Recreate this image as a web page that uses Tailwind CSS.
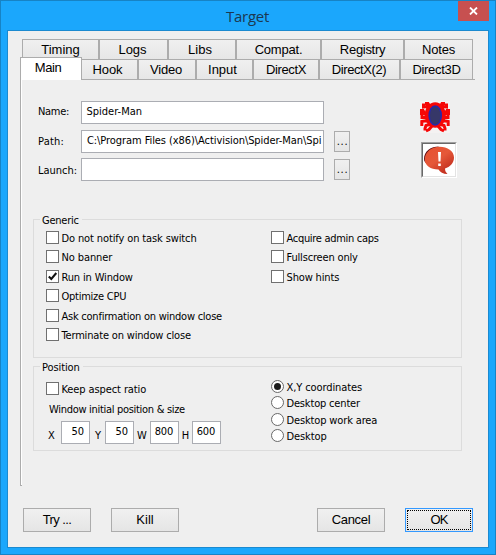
<!DOCTYPE html>
<html lang="en">
<head>
<meta charset="utf-8">
<title>Target</title>
<script src="https://cdn.jsdelivr.net/npm/@tailwindcss/browser@4"></script>
</head>
<body class="w-[496px] h-[555px] overflow-hidden bg-[#1ba7fc] border border-[#1783c5] font-['DejaVu_Sans_Condensed','Liberation_Sans',sans-serif] text-[11px] leading-[13px] text-black">
<header class="h-[29px] flex justify-between">
  <h1 class="w-[45px] ml-[225px] mt-[5px] font-['Open_Sans',sans-serif] text-[15px] leading-[20px] tracking-[-0.25px] text-[#1c3850]">Target</h1>
  <button class="w-[31px] h-5 mr-[6px] bg-[#c75050] flex items-center justify-center" aria-label="Close">
    <svg width="9" height="8" viewBox="0 0 9 8" fill="none" stroke="#fff" stroke-width="1.8"><path d="M1 .5 8 7.5M8 .5 1 7.5"/></svg>
  </button>
</header>
<main class="ml-[6px] w-[482px] h-[518px] border border-[#1b8ad0] bg-[#efefef] pt-2 flex flex-col">
  <nav class="ml-[12px] h-[41px] w-[455px] relative font-['Liberation_Sans',sans-serif] text-[13px] leading-[15px]">
    <div class="ml-[2px] w-[451px] h-[21px] flex text-center border-t border-l border-[#acacac] *:border-r *:border-[#acacac] *:pt-[2px] *:bg-linear-to-b *:from-[#f0f0f0] *:to-[#e6e6e6]">
      <div class="w-[76px]">Timing</div>
      <div class="w-[69px] tracking-[-0.1px] border-l pr-[2px]">Logs</div>
      <div class="w-[68px] border-l pr-[4px]">Libs</div>
      <div class="w-[85px] tracking-[-0.2px] border-l">Compat.</div>
      <div class="w-[83px] tracking-[-0.3px] border-l">Registry</div>
      <div class="w-[69px] tracking-[-0.2px] border-l">Notes</div>
    </div>
    <div class="w-[455px] h-[20px] flex items-stretch border-b border-[#acacac] text-center *:border-[#acacac]">
      <div class="w-[62px] h-[23px] -mt-[3px] border-t border-l border-r bg-white relative pt-[2px] pr-[6px] tracking-[-0.4px]">Main</div>
      <div class="flex-none w-[391px] h-[20px] -mt-px flex border-t *:border-r *:border-[#acacac] *:pt-[2px] *:bg-linear-to-b *:from-[#f0f0f0] *:to-[#e6e6e6]">
        <div class="w-[56px] pr-[4px] tracking-[-0.1px]">Hook</div>
        <div class="w-[58px] border-l pr-[2px] tracking-[-0.2px]">Video</div>
        <div class="w-[57px] border-l pr-[4px]">Input</div>
        <div class="w-[66px] border-l tracking-[-0.4px]">DirectX</div>
        <div class="w-[81px] border-l pr-px tracking-[-0.4px]">DirectX(2)</div>
        <div class="w-[73px] border-l tracking-[-0.3px]">Direct3D</div>
      </div>
    </div>
  </nav>

  <section class="ml-[12px] h-[406px] w-[455px] border-l border-[#acacac] flex flex-col">
    <div class="w-px h-[406px] bg-white -mb-[406px] border-b border-[#acacac]"></div>
    <div class="flex mt-[21px] ml-[17px] h-[80px]">
      <div class="w-[286px] flex flex-col gap-[6px]">
        <div class="flex h-[23px]"><label class="w-[43px] pt-[4px] tracking-[-0.3px]">Name:</label><div class="w-[243px] bg-white border border-[#abadb3] pl-[4.500px] pt-[3px]">Spider-Man</div></div>
        <div class="flex h-[23px]"><label class="w-[43px] pt-[5px] tracking-[0.2px]">Path:</label><div class="w-[243px] bg-white border border-[#abadb3] pl-[5px] pt-[3px] whitespace-nowrap tracking-[-0.07px]">C:\Program Files (x86)\Activision\Spider-Man\Spi</div></div>
        <div class="flex h-[23px] -mt-px"><label class="w-[43px] pt-[6px]">Launch:</label><div class="w-[243px] bg-white border border-[#abadb3]"></div></div>
      </div>
      <div class="ml-[10px] mt-[30px] flex flex-col gap-[7px] text-center *:w-[16px] *:h-[21px] *:border *:border-[#acacac] *:bg-linear-to-b *:from-[#f0f0f0] *:to-[#e5e5e5] *:leading-[19px] *:tracking-[0.7px] *:pl-px">
        <div>...</div>
        <div>...</div>
      </div>
      <div class="ml-[70px]">
        <svg width="30" height="32" viewBox="0 0 30 32" class="bg-[#f4f2f2] block">
          <g fill="none" stroke="#f60606" stroke-width="3">
            <path d="M9 9 7 5.500 3.500 6V2.500M10 6 8 2.500H5M9 13H5L3 9.500H0M8 16.500H2V12.500H0M9 20H4.500L1.800 20.500V25M11 23 6 24.500 5 27.500V29.500M12 25 9 28.500 6 30"/>
            <path d="M21 9 23 5.500 26.500 6V2.500M20 6 22 2.500H25M21 13H25L27 9.500H30M22 16.500H28V12.500H30M21 20H25.500L28.200 20.500V25M19 23 24 24.500 25 27.500V29.500M18 25 21 28.500 24 30"/>
          </g>
          <ellipse cx="15.200" cy="14" rx="10.500" ry="12.800" fill="#f60606"/>
          <ellipse cx="15.200" cy="14.500" rx="6.800" ry="10.200" fill="#2728ac"/>
          <ellipse cx="15.200" cy="14.500" rx="5.200" ry="8.700" fill="#363768"/>
        </svg>
        <div class="mt-[9px] ml-px w-[36px] h-[36px] bg-white border border-t-[#a0a0a0] border-l-[#a0a0a0] border-r-white border-b-white">
          <div class="w-[34px] h-[34px] border border-t-[#696969] border-l-[#696969] border-r-[#e3e3e3] border-b-[#e3e3e3]">
            <svg width="32" height="32" viewBox="0 0 32 32">
              <defs><linearGradient id="g" x2="0.800" y2="1"><stop offset="0" stop-color="#e8502f"/><stop offset=".5" stop-color="#e55839"/><stop offset="1" stop-color="#bd281a"/></linearGradient></defs>
              <path d="M1 15C1 7 8 2.500 16 2.500 12 5 4 8 4 20 2 18.500 1 17 1 15Z" fill="#5c0910"/>
              <path d="M16.500 2.800C24.500 2.800 31 7 31 13.500 31 19 27 23 22 24.500 22 27 23 28.500 24.500 30 20 30 17 28 15.500 25.500 7.500 25.500 1.800 21.500 1.800 15.500 1.800 8 8.500 2.800 16.500 2.800Z" fill="url(#g)"/>
              <path d="M15 8H18L17.500 17.500H15.500ZM15.200 19.500H17.800V22H15.200Z" fill="#fff"/>
            </svg>
          </div>
        </div>
      </div>
    </div>

    <fieldset class="relative min-w-0 ml-[12px] mt-[38px] w-[429px] h-[139px] border border-[#dcdcdc]">
      <div class="absolute left-[6px] top-[-6px] bg-[#efefef] pl-[2px] pr-[3px] tracking-[-0.25px]">Generic</div>
      <div class="flex pl-[12px] pt-[11px] whitespace-nowrap">
        <div class="w-[225px] flex-none flex flex-col [&_p]:flex [&_p]:h-[13px] [&_i]:w-[13px] [&_i]:h-[13px] [&_i]:border [&_i]:border-[#707070] [&_i]:bg-white [&_span]:mt-px [&_span]:ml-[2.500px]">
          <p><i></i><span class="tracking-[-0.12px]">Do not notify on task switch</span></p>
          <p class="mt-[6px]"><i></i><span class="tracking-[-0.1px]">No banner</span></p>
          <p class="mt-[7px]"><i><svg width="11" height="11" viewBox="0 0 11 11" fill="none" stroke="#111" stroke-width="2"><path d="M1.800 5.500 4.300 8 9.300 2"/></svg></i><span class="tracking-[-0.15px]">Run in Window</span></p>
          <p class="mt-[6px]"><i></i><span class="tracking-[-0.25px]">Optimize CPU</span></p>
          <p class="mt-[7px]"><i></i><span class="tracking-[-0.24px]">Ask confirmation on window close</span></p>
          <p class="mt-[6px]"><i></i><span class="tracking-[-0.17px]">Terminate on window close</span></p>
        </div>
        <div class="flex-none flex flex-col [&_p]:flex [&_p]:h-[13px] [&_i]:w-[13px] [&_i]:h-[13px] [&_i]:border [&_i]:border-[#707070] [&_i]:bg-white [&_span]:mt-px [&_span]:ml-[2.500px]">
          <p><i></i><span class="tracking-[-0.3px]">Acquire admin caps</span></p>
          <p class="mt-[6px]"><i></i><span class="tracking-[-0.17px]">Fullscreen only</span></p>
          <p class="mt-[7px]"><i></i><span class="tracking-[-0.15px]">Show hints</span></p>
        </div>
      </div>
    </fieldset>

    <fieldset class="relative min-w-0 ml-[12px] mt-[8px] w-[429px] h-[85px] border border-[#dcdcdc]">
      <div class="absolute left-[6px] top-[-6px] bg-[#efefef] pl-[2px] pr-[3px] tracking-[-0.1px]">Position</div>
      <div class="flex pl-[12px] whitespace-nowrap">
        <div class="w-[225px] flex-none pt-[15px]">
          <p class="flex h-[13px]"><i class="w-[13px] h-[13px] border border-[#707070] bg-white"></i><span class="mt-px ml-[2.500px] tracking-[-0.1px]">Keep aspect ratio</span></p>
          <p class="ml-[3px] mt-[8px] h-[13px] tracking-[-0.3px]">Window initial position &amp; size</p>
          <div class="flex mt-[5px] h-[23px] text-right *:odd:pt-[8px] *:odd:text-center *:even:w-[29px] *:even:bg-white *:even:border *:even:border-[#abadb3] *:even:pt-[3px] *:even:pr-[5px]">
            <span class="w-[15px] pr-[6px] pl-[2px]">X</span><div>50</div>
            <span class="w-[15px] pl-px">Y</span><div>50</div>
            <span class="w-[16px]">W</span><div class="tracking-[-0.2px]">800</div>
            <span class="w-[13px]">H</span><div class="tracking-[-0.2px]">600</div>
          </div>
        </div>
        <div class="flex-none pt-[13px] [&_p]:flex [&_p]:h-[13px] [&_i]:w-[13px] [&_i]:h-[13px] [&_i]:rounded-full [&_i]:border [&_i]:border-[#686868] [&_i]:bg-white [&_span]:mt-px [&_span]:ml-[2.500px]">
          <p><i class="flex items-center justify-center"><b class="block w-[7px] h-[7px] rounded-full bg-[#1c1c1c]"></b></i><span class="tracking-[-0.1px]">X,Y coordinates</span></p>
          <p class="mt-[3px]"><i></i><span class="tracking-[-0.17px]">Desktop center</span></p>
          <p class="mt-[4px]"><i></i><span class="tracking-[-0.14px]">Desktop work area</span></p>
          <p class="mt-[3px]"><i></i><span class="tracking-[-0.1px]">Desktop</span></p>
        </div>
      </div>
    </fieldset>
  </section>

  <footer class="flex mt-[22px] ml-[15px] text-center font-['Liberation_Sans',sans-serif] text-[13px] leading-[22px] *:w-[68px] *:h-[24px] *:border *:border-[#acacac] *:bg-linear-to-b *:from-[#f0f0f0] *:to-[#e5e5e5]">
    <button class="tracking-[-0.6px]">Try ...</button>
    <button class="ml-[20px]">Kill</button>
    <button class="ml-[138px] tracking-[-0.3px]">Cancel</button>
    <button class="ml-[20px] border-[#3399ff]! p-px"><span class="block h-[20px] leading-[18px] border border-dotted border-black tracking-[-0.8px]">OK</span></button>
  </footer>
</main>
</body>
</html>
